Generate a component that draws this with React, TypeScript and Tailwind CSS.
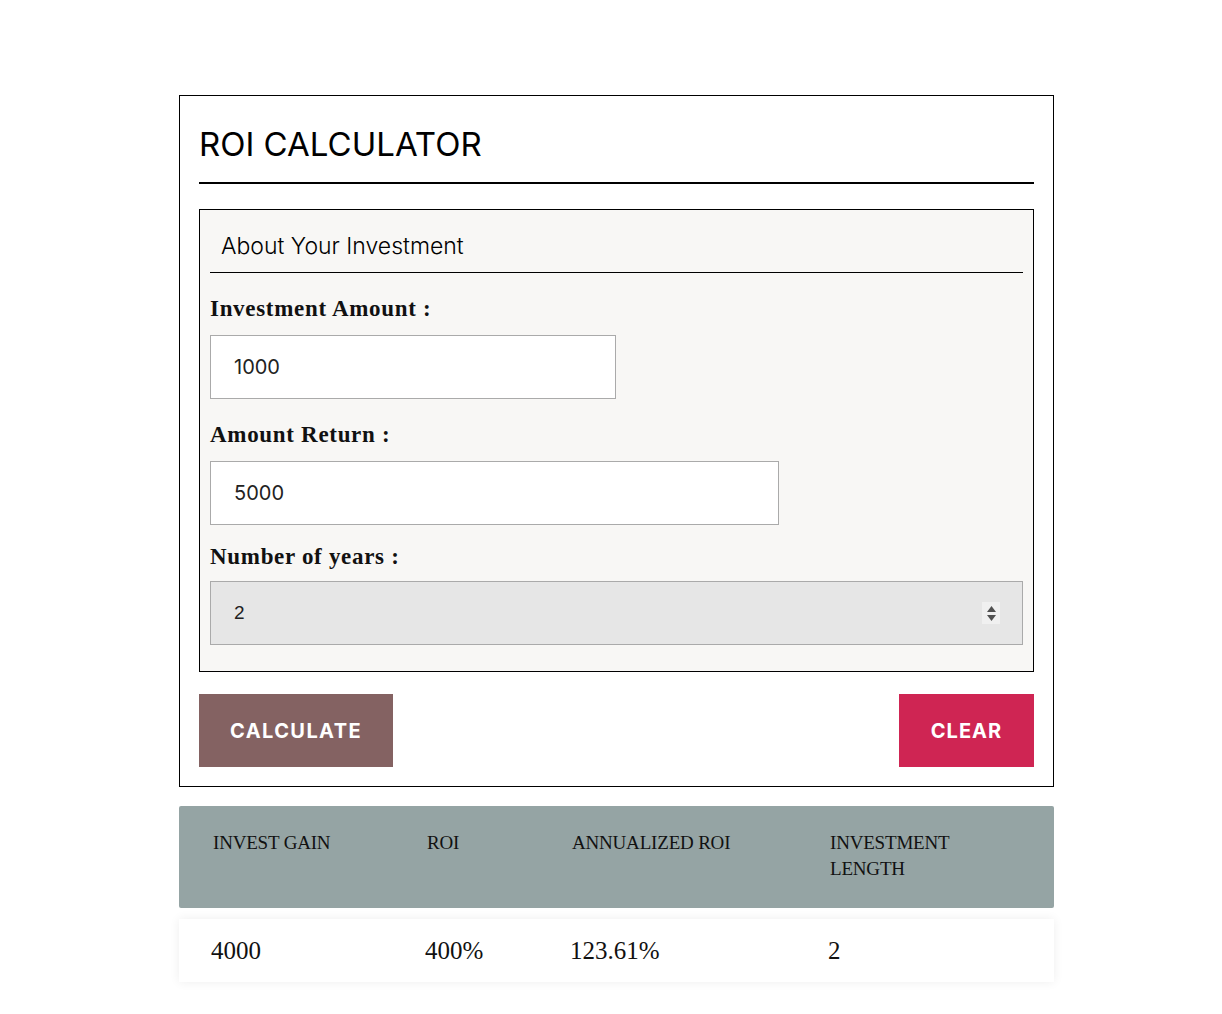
import { useState } from "react";

const serif = "font-['Liberation_Serif','Times_New_Roman',serif]";
const inter = "font-['Inter','Liberation_Sans',sans-serif]";

const results = [
  { label: "INVEST GAIN", value: "4000" },
  { label: "ROI", value: "400%" },
  { label: "ANNUALIZED ROI", value: "123.61%" },
  { label: "INVESTMENT LENGTH", value: "2" },
];

const App = () => {
  const [amount, setAmount] = useState("1000");
  const [ret, setRet] = useState("5000");

  return (
    <div className="min-h-screen bg-white pt-[95px]">
      <div className="ml-[179px] w-[875px]">
        {/* Calculator card */}
        <div className="border border-black px-[19px] pt-[26px] pb-[19px]">
          <h1
            className={`${inter} text-[33px] leading-[44px] text-black pb-[16px] border-b-2 border-black`}
          >
            ROI CALCULATOR
          </h1>

          <div className="mt-[25px] border border-black bg-[#f8f7f5] px-[10px] pt-[20px] pb-[26px]">
            <h2
              className={`${inter} font-light text-[23px] leading-[32px] text-black pl-[11px] pb-[10px] border-b border-black`}
            >
              About Your Investment
            </h2>

            <label
              className={`${serif} block mt-[22px] text-[23px] leading-[28px] font-bold tracking-[0.03em] text-[#111]`}
            >
              Investment Amount :
            </label>
            <input
              value={amount}
              onChange={(e) => setAmount(e.target.value)}
              className={`${inter} mt-[12px] block w-[406px] h-[64px] bg-white border border-[#aaa] px-[23px] text-[20px] text-[#222] outline-none`}
            />

            <label
              className={`${serif} block mt-[22px] text-[23px] leading-[28px] font-bold tracking-[0.03em] text-[#111]`}
            >
              Amount Return :
            </label>
            <input
              value={ret}
              onChange={(e) => setRet(e.target.value)}
              className={`${inter} mt-[12px] block w-[569px] h-[64px] bg-white border border-[#aaa] px-[23px] text-[20px] text-[#222] outline-none`}
            />

            <label
              className={`${serif} block mt-[18px] text-[23px] leading-[28px] font-bold tracking-[0.03em] text-[#111]`}
            >
              Number of years :
            </label>
            <div className="mt-[10px] flex items-center justify-between h-[64px] bg-[#e6e6e6] border border-[#aaa] pl-[23px] pr-[22px]">
              <span className="font-['Liberation_Sans',sans-serif] text-[19px] text-[#222]">
                2
              </span>
              <div className="flex flex-col items-center justify-center gap-[3px] w-[18px] h-[22px] bg-[#f0f0f0]">
                <svg width="9" height="6" viewBox="0 0 9 6">
                  <path d="M4.5 0 L9 6 L0 6 Z" fill="#505050" />
                </svg>
                <svg width="9" height="6" viewBox="0 0 9 6">
                  <path d="M0 0 L9 0 L4.5 6 Z" fill="#505050" />
                </svg>
              </div>
            </div>
          </div>

          <div className="mt-[22px] flex justify-between">
            <button
              className={`${inter} h-[73px] w-[194px] bg-[#846262] text-white text-[20px] font-bold tracking-[0.07em]`}
            >
              CALCULATE
            </button>
            <button
              className={`${inter} h-[73px] w-[135px] bg-[#cf2553] text-white text-[20px] font-bold tracking-[0.05em]`}
            >
              CLEAR
            </button>
          </div>
        </div>

        {/* Results */}
        <div
          className={`${serif} mt-[19px] grid grid-cols-[214px_145px_258px_1fr] bg-[#95a4a4] rounded-[2px] px-[34px] pt-[24px] pb-[26px] text-[19px] leading-[26px] tracking-[-0.01em] text-[#111]`}
        >
          {results.map((r, i) => (
            <div key={r.label} className={i === 3 ? "max-w-[130px]" : ""}>
              {r.label}
            </div>
          ))}
        </div>
        <div
          className={`${serif} mt-[11px] grid grid-cols-[214px_145px_258px_1fr] items-center h-[63px] bg-white px-[32px] text-[25px] text-[#111] shadow-[0_0_10px_rgba(0,0,0,0.07)]`}
        >
          {results.map((r) => (
            <div key={r.label}>{r.value}</div>
          ))}
        </div>
      </div>
    </div>
  );
};

export default App;
